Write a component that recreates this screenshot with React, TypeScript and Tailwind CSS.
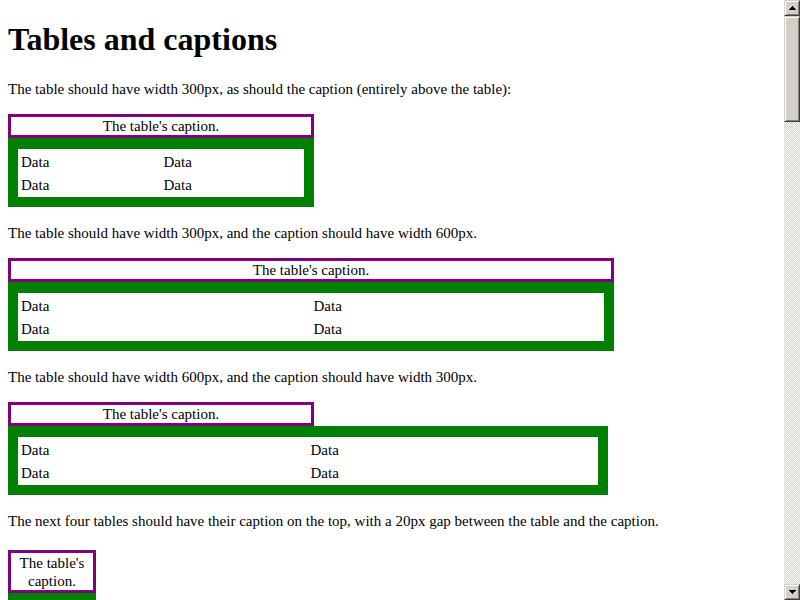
type ExampleProps = {
  gap: string;
  captionClass: string;
  tableClass: string;
};

const Example = ({ gap, captionClass, tableClass }: ExampleProps) => (
  <div className={gap}>
    <div className={`border-[3px] border-[#800080] pt-[1px] text-center leading-[17px] ${captionClass}`}>
      The table's caption.
    </div>
    <div className={`border-x-[10px] border-b-[10px] border-t-[11px] border-[#008000] ${tableClass}`}>
      <div className="grid grid-cols-2 gap-x-[1px] bg-white px-[1px] py-[1px]">
        {[0, 1, 2, 3].map((i) => (
          <div key={i} className="h-[23px] pl-[2px] pt-[1px] leading-[22px]">
            Data
          </div>
        ))}
      </div>
    </div>
  </div>
);

const Arrow = ({ down }: { down?: boolean }) => (
  <svg width="7" height="4" viewBox="0 0 7 4" shapeRendering="crispEdges">
    <polygon points={down ? '0,0 7,0 3.5,4' : '3.5,0 7,4 0,4'} fill="#000" />
  </svg>
);

const btn =
  'flex items-center justify-center bg-[#d4d0c8] border border-t-[#d4d0c8] border-l-[#d4d0c8] border-b-[#404040] border-r-[#404040] shadow-[inset_1px_1px_0_#ffffff,inset_-1px_-1px_0_#808080]';

const Scrollbar = () => (
  <div className="flex w-4 shrink-0 flex-col">
    <div className={`h-4 ${btn}`}>
      <Arrow />
    </div>
    <div className={`h-[106px] ${btn}`} />
    <div className="flex-1 bg-[repeating-conic-gradient(#d4d0c8_0%_25%,#ffffff_0%_50%)] bg-[length:2px_2px]" />
    <div className={`h-4 ${btn}`}>
      <Arrow down />
    </div>
  </div>
);

export default function App() {
  return (
    <div className="flex h-[600px] w-[800px] overflow-hidden bg-white font-['Liberation_Serif',serif] text-[15px] text-black">
      <main className="min-w-0 flex-1 overflow-hidden px-2">
        <h1 className="mt-[21px] text-[32px] font-bold leading-[37px]">Tables and captions</h1>
        <p className="mt-[22px] leading-[18px]">
          The table should have width 300px, as should the caption (entirely above the table):
        </p>
        <Example gap="mt-4" captionClass="w-[306px]" tableClass="w-[306px]" />

        <p className="mt-[17px] leading-[18px]">
          The table should have width 300px, and the caption should have width 600px.
        </p>
        <Example gap="mt-4" captionClass="w-[606px]" tableClass="w-[606px]" />

        <p className="mt-[17px] leading-[18px]">
          The table should have width 600px, and the caption should have width 300px.
        </p>
        <Example gap="mt-4" captionClass="w-[306px]" tableClass="w-[600px]" />

        <p className="mt-[17px] leading-[18px]">
          The next four tables should have their caption on the top, with a 20px gap between the table and the caption.
        </p>
        <div className="mt-5 w-[88px]">
          <div className="border-[3px] border-[#800080] pt-[1px] text-center leading-[18px]">The table's caption.</div>
          <div className="h-10 border-x-[10px] border-t-[11px] border-[#008000] bg-white" />
        </div>
      </main>
      <Scrollbar />
    </div>
  );
}
